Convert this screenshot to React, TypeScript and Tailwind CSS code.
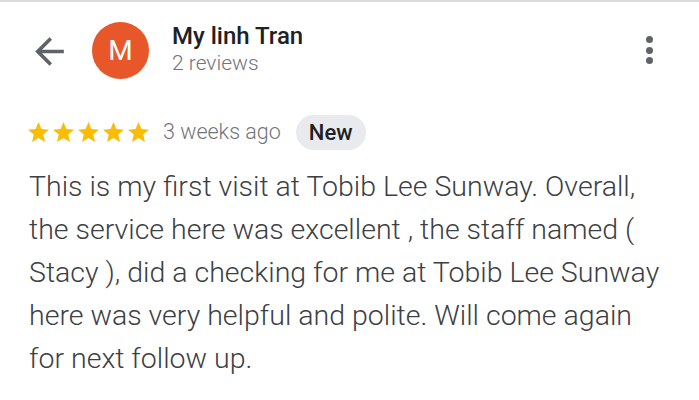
const font = { fontFamily: "Roboto, 'Noto Sans', sans-serif" }

function Star() {
  return (
    <svg viewBox="0 0 24 24" className="h-[25px] w-[25px] fill-[#fbbc04]">
      <path d="M12 17.27L18.18 21l-1.64-7.03L22 9.24l-7.19-.61L12 2 9.19 8.63 2 9.24l5.46 4.73L5.82 21z" />
    </svg>
  )
}

export default function App() {
  return (
    <div style={font} className="h-[400px] w-[699px] overflow-hidden border-t-2 border-[#dadada] bg-white">
      <div className="flex items-start pl-[28px] pt-[20px]">
        <svg viewBox="0 0 24 24" className="mt-[8px] h-[43px] w-[43px] fill-[#5f6368]">
          <path d="M20 11H7.83l5.59-5.59L12 4l-8 8 8 8 1.41-1.41L7.83 13H20v-2z" />
        </svg>
        <div className="ml-[21px] flex h-[57px] w-[57px] items-center justify-center rounded-full bg-[#e8572a] text-[28px] text-white">
          M
        </div>
        <div className="ml-[23px] flex flex-col">
          <span className="text-[24px] leading-[28px] font-medium text-[#202124]">My linh Tran</span>
          <span className="text-[21px] leading-[26px] font-light text-[#70757a]">2 reviews</span>
        </div>
        <div className="mr-[46px] ml-auto mt-[14px] flex flex-col gap-[3.5px]">
          <span className="h-[7px] w-[7px] rounded-full bg-[#5f6368]" />
          <span className="h-[7px] w-[7px] rounded-full bg-[#5f6368]" />
          <span className="h-[7px] w-[7px] rounded-full bg-[#5f6368]" />
        </div>
      </div>

      <div className="mt-[36px] flex h-[35px] items-center pl-[26px]">
        <div className="flex">
          <Star />
          <Star />
          <Star />
          <Star />
          <Star />
        </div>
        <span className="ml-[12px] text-[21.5px] font-light text-[#70757a]">3 weeks ago</span>
        <span className="ml-[15px] flex h-[35px] items-center rounded-full bg-[#e8eaed] px-[13px] text-[22px] font-medium text-[#202124]">
          New
        </span>
      </div>

      <p className="mt-[15px] pl-[29px] text-[28.5px] leading-[43px] font-light text-[#3c4043]">
        This is my first visit at Tobib Lee Sunway. Overall,
        <br />
        the service here was excellent , the staff named (
        <br />
        Stacy ), did a checking for me at Tobib Lee Sunway
        <br />
        here was very helpful and polite. Will come again
        <br />
        for next follow up.
      </p>
    </div>
  )
}
